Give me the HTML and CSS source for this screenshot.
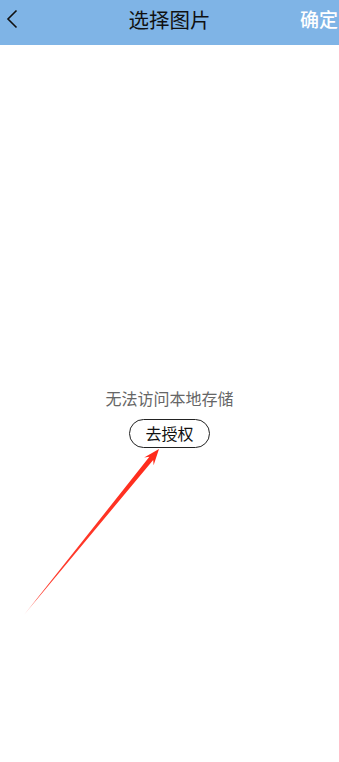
FILE: index.html
```html
<!DOCTYPE html>
<html lang="zh">
<head>
<meta charset="utf-8">
<link rel="stylesheet" href="styles.css">
</head>
<body>
<header class="topbar">
  <span class="back">
    <svg width="12" height="20" viewBox="0 0 12 20"><path d="M10.5 1.5 L2 10 L10.5 18.5" fill="none" stroke="#111" stroke-width="1.6"/></svg>
  </span>
  <h1 class="title">选择图片</h1>
  <span class="confirm">确定</span>
</header>
<main class="content">
  <p class="msg">无法访问本地存储</p>
  <button class="auth">去授权</button>
</main>
<svg class="arrow" width="339" height="762" viewBox="0 0 339 762">
  <defs>
    <linearGradient id="g" x1="24" y1="615" x2="159" y2="449" gradientUnits="userSpaceOnUse">
      <stop offset="0" stop-color="#ff2a1a" stop-opacity="0.3"/>
      <stop offset="0.1" stop-color="#ff2a1a" stop-opacity="0.9"/>
      <stop offset="1" stop-color="#ff2a1a"/>
    </linearGradient>
  </defs>
  <polygon points="159,449 153.6,465.2 153.2,460.0 23.5,615.5 149.4,456.8 144.2,457.6" fill="url(#g)"/>
</svg>
</body>
</html>
```
FILE: styles.css
```css
* { box-sizing: border-box; }
html, body { margin: 0; padding: 0; background: #fff; }
body {
  width: 339px;
  height: 762px;
  font-family: "Noto Sans CJK SC", "Noto Sans", sans-serif;
  position: relative;
  overflow: hidden;
}
.topbar {
  height: 45px;
  background: #7fb4e6;
  display: grid;
  grid-template-columns: 1fr auto 1fr;
  align-items: center;
  padding-bottom: 8px;
}
.back { display: flex; align-items: center; padding-left: 6px; }
.back svg { display: block; }
.title {
  margin: 0;
  font-size: 20.5px;
  font-weight: 400;
  color: #111;
  line-height: 24px;
}
.confirm {
  font-size: 19px;
  font-weight: 500;
  color: #fff;
  line-height: 24px;
  text-align: right;
  padding-right: 1px;
}
.content {
  display: flex;
  flex-direction: column;
  align-items: center;
  padding-top: 342px;
}
.msg {
  margin: 0;
  font-size: 16px;
  line-height: 22px;
  color: #666;
}
.auth {
  margin-top: 10px;
  width: 81px;
  height: 29px;
  border: 1px solid #222;
  border-radius: 15px;
  background: #fff;
  font-family: inherit;
  font-size: 16px;
  color: #111;
  padding: 0;
  line-height: 27px;
}
.arrow { position: absolute; left: 0; top: 0; pointer-events: none; }
```
